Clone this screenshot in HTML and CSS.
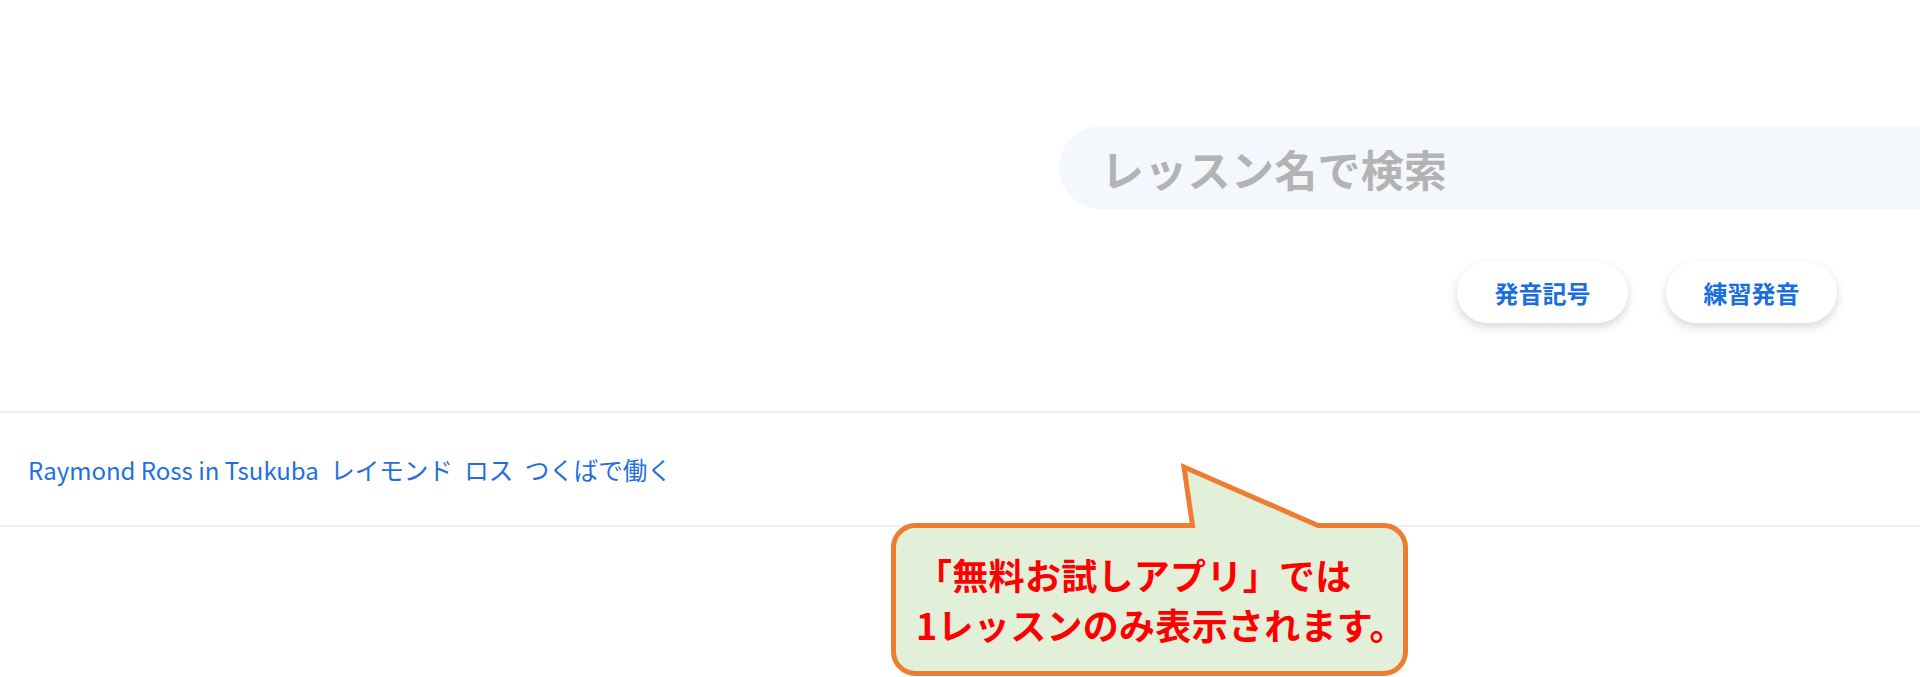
FILE: index.html
```html
<!DOCTYPE html>
<html lang="ja">
<head>
<meta charset="utf-8">
<title>レッスン一覧</title>
<link rel="stylesheet" href="styles.css">
</head>
<body>
<div class="page">
  <div class="search-row">
    <div class="search"><input class="search-input" type="text" placeholder="レッスン名で検索"></div>
  </div>
  <div class="chip-row">
    <button class="chip">発音記号</button>
    <button class="chip">練習発音</button>
  </div>
  <ul class="lesson-list">
    <li class="lesson-item"><a class="lesson-link" href="#">Raymond Ross in Tsukuba<span class="lesson-ja"> レイモンド ロス つくばで働く</span></a></li>
  </ul>
  <div class="callout">
    <svg class="callout-shape" width="530" height="219" viewBox="0 0 530 219">
      <path d="M 30.5 67.5 H 307.5 L 299 9 L 433 67.5 H 498.5 A 22 22 0 0 1 520.5 89.5 V 193.5 A 22 22 0 0 1 498.5 215.5 H 30.5 A 22 22 0 0 1 8.5 193.5 V 89.5 A 22 22 0 0 1 30.5 67.5 Z" fill="#e2efd9" stroke="#ed7d31" stroke-width="5" stroke-linejoin="miter"/>
    </svg>
    <div class="callout-text">「無料お試しアプリ」では<br>1レッスンのみ表示されます。</div>
  </div>
</div>
</body>
</html>
```
FILE: styles.css
```css
html, body {
  margin: 0;
  padding: 0;
  background: #ffffff;
  overflow: hidden;
}
body {
  font-family: "Noto Sans CJK JP", "Noto Sans", sans-serif;
}
.page {
  position: relative;
  width: 1920px;
  height: 677px;
  padding-top: 126px;
  box-sizing: border-box;
}
.search-row {
  display: flex;
  justify-content: flex-end;
}
.search {
  width: 861px;
  height: 83px;
  background: #f4f7fc;
  border-radius: 42px 0 0 42px;
  display: flex;
  align-items: center;
  padding-left: 42px;
  box-sizing: border-box;
}
.search-input {
  border: none;
  outline: none;
  background: transparent;
  width: 100%;
  font-family: "Noto Sans CJK JP", sans-serif;
  font-size: 43px;
  font-weight: 700;
  letter-spacing: 0.3px;
  color: #333;
  padding: 0;
}
.search-input::placeholder {
  color: #b3b3b3;
}
.chip-row {
  display: flex;
  justify-content: flex-end;
  gap: 38px;
  padding-right: 83px;
  margin-top: 53px;
}
.chip {
  width: 171px;
  height: 61px;
  border: none;
  border-radius: 31px;
  background: #ffffff;
  box-shadow: 0 4px 10px rgba(0, 0, 0, 0.16);
  font-family: "Noto Sans CJK JP", sans-serif;
  font-size: 24px;
  font-weight: 700;
  color: #1b6fdc;
  padding: 0;
}
.lesson-list {
  list-style: none;
  margin: 88px 0 0;
  padding: 0;
  border-top: 2px solid #eceef4;
}
.lesson-item {
  height: 112px;
  display: flex;
  align-items: center;
  padding-left: 28px;
  border-bottom: 2px solid #eceef4;
}
.lesson-link {
  font-family: "Noto Sans CJK JP", sans-serif;
  font-size: 24px;
  color: #1f6fe0;
  text-decoration: none;
}
.lesson-ja {
  font-size: 24.5px;
  word-spacing: 6px;
}
.callout {
  position: absolute;
  left: 885px;
  top: 458px;
  width: 530px;
  height: 219px;
}
.callout-shape {
  position: absolute;
  left: 0;
  top: 0;
}
.callout-text {
  position: absolute;
  left: 31px;
  top: 91px;
  font-family: "Noto Sans CJK JP", sans-serif;
  font-size: 36px;
  font-weight: 700;
  line-height: 50px;
  letter-spacing: 0.3px;
  color: #ff0000;
  white-space: nowrap;
}
```
